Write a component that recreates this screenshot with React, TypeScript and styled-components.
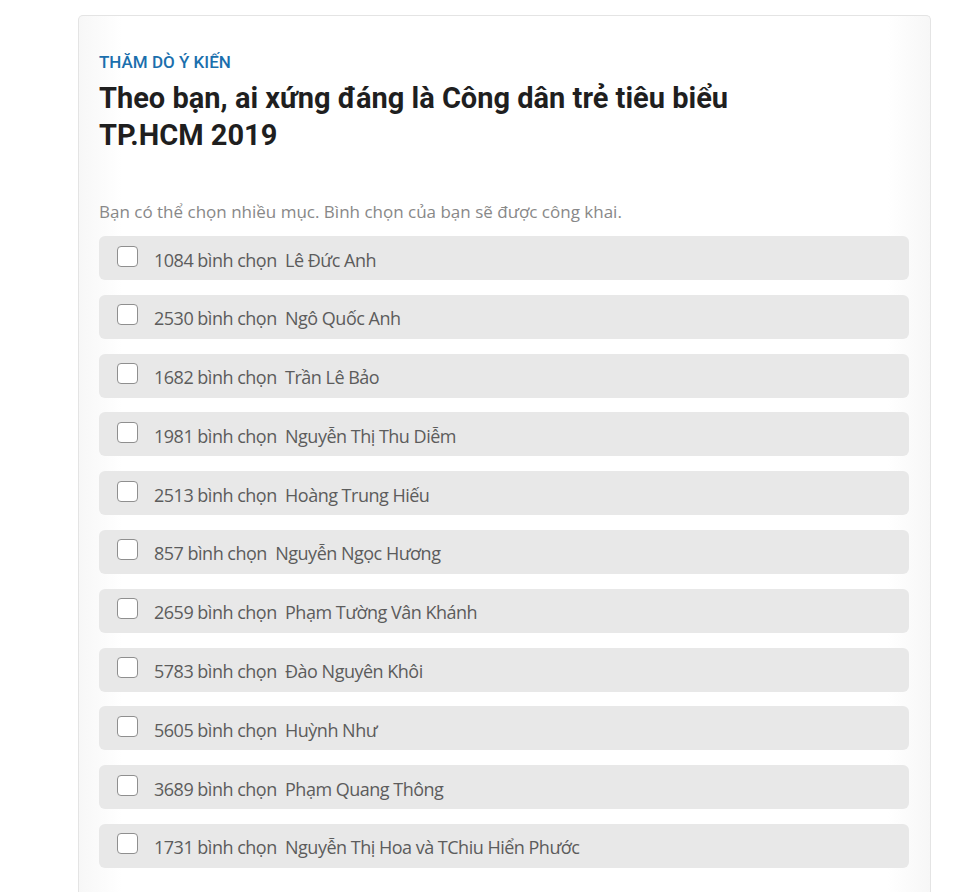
import React from "react";
import styled, { createGlobalStyle } from "styled-components";

const GlobalStyle = createGlobalStyle`
  body {
    margin: 0;
    background: #ffffff;
  }
`;

const Page = styled.div`
  padding: 15px 49px 0 78px;
`;

const PollCard = styled.div`
  border: 1px solid #e4e4e4;
  border-bottom: none;
  border-radius: 5px 5px 0 0;
  background: linear-gradient(to right, #f7f7f7, #ffffff 5%, #ffffff 95%, #f7f7f7);
  padding: 35px 21px 24px 20px;
`;

const Kicker = styled.div`
  font-family: Roboto, "Liberation Sans", sans-serif;
  font-weight: 500;
  font-size: 17px;
  color: #1b6fad;
  line-height: 22px;
`;

const Question = styled.h1`
  font-family: Roboto, "Liberation Sans", sans-serif;
  font-weight: 700;
  font-size: 29px;
  line-height: 37px;
  color: #1f1f1f;
  margin: 7px 0 0 0;
  max-width: 660px;
`;

const Hint = styled.p`
  font-family: "Open Sans", "Liberation Sans", sans-serif;
  font-size: 17px;
  color: #888888;
  margin: 47px 0 13px 0;
  line-height: 22px;
`;

const OptionList = styled.div`
  display: flex;
  flex-direction: column;
  gap: 14.8px;
`;

const Option = styled.label`
  display: flex;
  align-items: center;
  height: 44px;
  padding: 0 16px 0 18px;
  background: #e8e8e8;
  border-radius: 6px;
  cursor: pointer;
`;

const Box = styled.span`
  box-sizing: border-box;
  width: 21px;
  height: 21px;
  border: 1px solid #8f8f8f;
  border-radius: 4px;
  background: #ffffff;
  margin-right: 16px;
  flex-shrink: 0;
  position: relative;
  top: -2px;
`;

const OptionText = styled.span`
  font-family: "Open Sans", "Liberation Sans", sans-serif;
  font-size: 18px;
  letter-spacing: -0.5px;
  color: #5c5c5c;
  white-space: pre;
  padding-top: 3px;
`;

const options: [number, string][] = [
  [1084, "Lê Đức Anh"],
  [2530, "Ngô Quốc Anh"],
  [1682, "Trần Lê Bảo"],
  [1981, "Nguyễn Thị Thu Diễm"],
  [2513, "Hoàng Trung Hiếu"],
  [857, "Nguyễn Ngọc Hương"],
  [2659, "Phạm Tường Vân Khánh"],
  [5783, "Đào Nguyên Khôi"],
  [5605, "Huỳnh Như"],
  [3689, "Phạm Quang Thông"],
  [1731, "Nguyễn Thị Hoa và TChiu Hiển Phước"],
];

export default function App() {
  return (
    <Page>
      <GlobalStyle />
      <PollCard>
        <Kicker>THĂM DÒ Ý KIẾN</Kicker>
        <Question>
          Theo bạn, ai xứng đáng là Công dân trẻ tiêu biểu TP.HCM 2019
        </Question>
        <Hint>Bạn có thể chọn nhiều mục. Bình chọn của bạn sẽ được công khai.</Hint>
        <OptionList>
          {options.map(([votes, name]) => (
            <Option key={name}>
              <Box />
              <OptionText>{`${votes} bình chọn  ${name}`}</OptionText>
            </Option>
          ))}
        </OptionList>
      </PollCard>
    </Page>
  );
}
